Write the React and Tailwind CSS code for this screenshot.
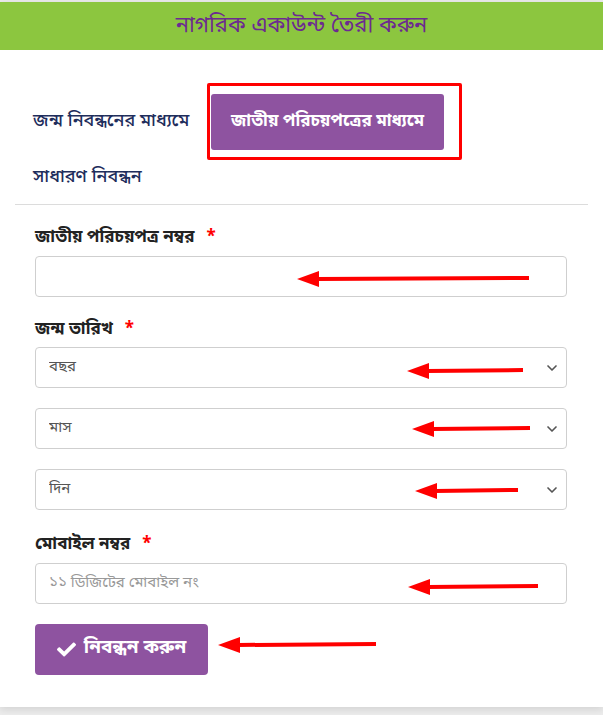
import { ChevronDown } from "lucide-react";
import { FaCheck } from "react-icons/fa";

const BN = { fontFamily: '"Noto Sans Bengali", "Noto Serif Bengali", "Lohit Bengali", "Noto Sans", sans-serif' };

// লাল তীর চিহ্ন (annotation)
function Arrow({ className, width }) {
  return (
    <svg
      className={"pointer-events-none absolute " + className}
      width={width}
      height="18"
      viewBox={`0 0 ${width} 18`}
    >
      <polygon points={`0,9 22,1 22,17`} fill="#ff0000" />
      <line x1="20" y1="9" x2={width} y2="8" stroke="#ff0000" strokeWidth="4" />
    </svg>
  );
}

function Label({ children }) {
  return (
    <label className="block text-[17px] font-bold text-[#222] mb-[5px]">
      {children}
      <span className="text-[#ff0000] ml-3">*</span>
    </label>
  );
}

function SelectBox({ placeholder, arrow }) {
  return (
    <div className="relative">
      <select className="w-full h-[41px] appearance-none rounded border border-[#cfcfcf] bg-white pl-[13px] text-[15px] text-[#555] outline-none">
        <option>{placeholder}</option>
      </select>
      <ChevronDown
        size={16}
        strokeWidth={2.5}
        className="pointer-events-none absolute right-[7px] top-[13px] text-[#555]"
      />
      {arrow}
    </div>
  );
}

export default function App() {
  return (
    <div className="min-h-[715px] bg-[#ececec] pt-[2px]" style={BN}>
      <div className="bg-white shadow-[0_2px_8px_rgba(0,0,0,0.12)] pb-[32px]">
        <div className="h-[48px] bg-[#8cc63f] flex items-center justify-center">
          <h1 className="text-[22px] text-[#6c2a91]">নাগরিক একাউন্ট তৈরী করুন</h1>
        </div>

        {/* নিবন্ধনের ধরন */}
        <div className="px-[33px] pt-[33px]">
          <div className="flex items-center">
            <span className="text-[18px] font-medium text-[#1e2d5c] w-[174px]">জন্ম নিবন্ধনের মাধ্যমে</span>
            <div className="border-[3px] border-[#ff0000] rounded-[2px] pl-[1px] pr-[15px] pt-[8px] pb-[7px]">
              <button className="h-[56px] w-[233px] rounded-[3px] bg-[#8e53a0] text-white text-[17px] font-bold">
                জাতীয় পরিচয়পত্রের মাধ্যমে
              </button>
            </div>
          </div>
          <div className="text-[18px] font-medium text-[#1e2d5c] mt-[4px]">সাধারণ নিবন্ধন</div>
        </div>
        <div className="mx-[15px] mt-[13px] border-t border-[#dcdcdc]" />

        {/* ফর্ম */}
        <div className="px-[35px] pt-[20px] pr-[36px]">
          <Label>জাতীয় পরিচয়পত্র নম্বর</Label>
          <div className="relative">
            <input className="w-full h-[41px] rounded border border-[#cfcfcf] bg-white px-3 outline-none" />
            <Arrow className="left-[262px] top-[14px]" width={232} />
          </div>

          <div className="mt-[20px]">
            <Label>জন্ম তারিখ</Label>
          </div>
          <div className="flex flex-col gap-[20px]">
            <SelectBox
              placeholder="বছর"
              arrow={<Arrow className="left-[372px] top-[15px]" width={116} />}
            />
            <SelectBox
              placeholder="মাস"
              arrow={<Arrow className="left-[377px] top-[12px]" width={118} />}
            />
            <SelectBox
              placeholder="দিন"
              arrow={<Arrow className="left-[380px] top-[13px]" width={103} />}
            />
          </div>

          <div className="mt-[22px]">
            <Label>মোবাইল নম্বর</Label>
          </div>
          <div className="relative">
            <input
              placeholder="১১ ডিজিটের মোবাইল নং"
              className="w-full h-[41px] rounded border border-[#cfcfcf] bg-white pl-[13px] text-[15px] outline-none placeholder:text-[#999]"
            />
            <Arrow className="left-[373px] top-[15px]" width={130} />
          </div>

          <div className="relative mt-[20px]">
            <button className="h-[51px] w-[173px] rounded bg-[#8e53a0] text-white text-[19px] font-bold flex items-center justify-center gap-[8px]">
              <FaCheck size={19} />
              নিবন্ধন করুন
            </button>
            <Arrow className="left-[183px] top-[12px]" width={158} />
          </div>
        </div>
      </div>
    </div>
  );
}
